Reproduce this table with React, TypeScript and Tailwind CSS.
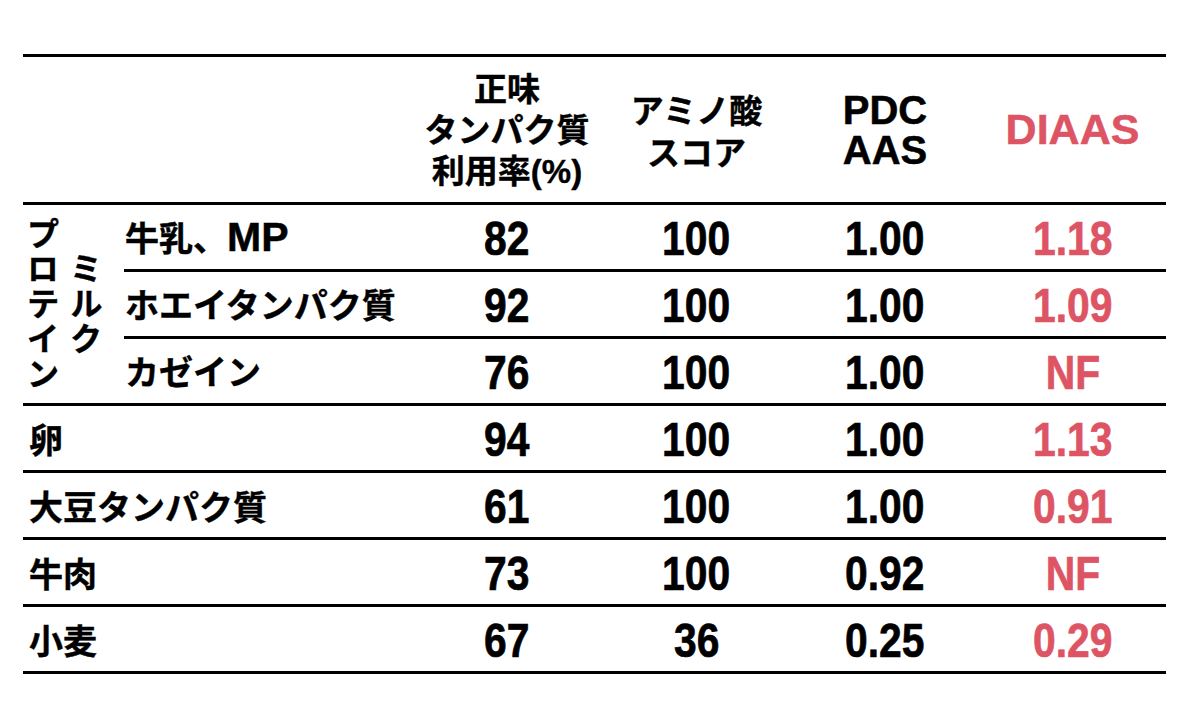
const jp = "font-['Noto_Sans_CJK_JP','Liberation_Sans',sans-serif] font-bold [-webkit-text-stroke:0.4px_currentColor]"
const num = "inline-block scale-x-[0.85] font-['Liberation_Sans',sans-serif] font-bold [-webkit-text-stroke:0.7px_currentColor]"

type Vals = [string, string, string, string]

const milk: { label: React.ReactNode; key: string; vals: Vals }[] = [
  {
    key: 'milk',
    label: (
      <>
        牛乳、<span className="font-['Liberation_Sans',sans-serif] font-bold text-[41px] [-webkit-text-stroke:0.5px_currentColor]">MP</span>
      </>
    ),
    vals: ['82', '100', '1.00', '1.18'],
  },
  { key: 'whey', label: 'ホエイタンパク質', vals: ['92', '100', '1.00', '1.09'] },
  { key: 'casein', label: 'カゼイン', vals: ['76', '100', '1.00', 'NF'] },
]

const rows: { label: string; vals: Vals }[] = [
  { label: '卵', vals: ['94', '100', '1.00', '1.13'] },
  { label: '大豆タンパク質', vals: ['61', '100', '1.00', '0.91'] },
  { label: '牛肉', vals: ['73', '100', '0.92', 'NF'] },
  { label: '小麦', vals: ['67', '36', '0.25', '0.29'] },
]

function Cells({ vals }: { vals: Vals }) {
  return (
    <>
      <div className="w-[190px] flex items-center justify-center pt-[3px] text-[48px] leading-none text-black">
        <span className={num}>{vals[0]}</span>
      </div>
      <div className="w-[189px] flex items-center justify-center pt-[3px] text-[48px] leading-none text-black">
        <span className={num}>{vals[1]}</span>
      </div>
      <div className="w-[188px] flex items-center justify-center pt-[3px] text-[48px] leading-none text-black">
        <span className={num}>{vals[2]}</span>
      </div>
      <div className="w-[187px] flex items-center justify-center pt-[3px] text-[48px] leading-none text-[#dd5464]">
        <span className={num}>{vals[3]}</span>
      </div>
    </>
  )
}

function Vertical({ text }: { text: string }) {
  return (
    <div
      className={`w-[34px] [writing-mode:vertical-rl] [text-orientation:upright] text-[33px] leading-[34px] tracking-[2px] text-black ${jp}`}
    >
      {text}
    </div>
  )
}

export default function App() {
  return (
    <div className="w-[1185px] h-[720px] bg-white pt-[54px] pl-[23px]">
      <div className="w-[1143px] border-t-[3px] border-black">
        {/* header */}
        <div className="flex h-[148px] border-b-[3px] border-black">
          <div className="w-[389px]" />
          <div className={`w-[190px] flex items-center justify-center text-center text-[33px] leading-[41px] text-black ${jp}`}>
            <p>
              正味
              <br />
              タンパク質
              <br />
              利用率<span className="font-['Liberation_Sans',sans-serif] font-bold">(%)</span>
            </p>
          </div>
          <div className={`w-[189px] flex items-center justify-center text-center text-[33px] leading-[42px] text-black ${jp}`}>
            <p>
              アミノ酸
              <br />
              スコア
            </p>
          </div>
          <div className="w-[188px] flex items-center justify-center text-center font-['Liberation_Sans',sans-serif] font-bold text-[40px] leading-[40px] text-black [-webkit-text-stroke:0.5px_currentColor]">
            <p>
              PDC
              <br />
              AAS
            </p>
          </div>
          <div className="w-[187px] flex items-center justify-center font-['Liberation_Sans',sans-serif] font-bold text-[43px] leading-none text-[#dd5464] [-webkit-text-stroke:0.5px_currentColor]">
            DIAAS
          </div>
        </div>

        {/* milk protein group */}
        <div className="flex border-b-[3px] border-black">
          <div className="w-[101px] flex items-center pl-[3px] gap-[9px]">
            <Vertical text="プロテイン" />
            <Vertical text="ミルク" />
          </div>
          <div className="flex-1 flex flex-col">
            {milk.map((r, i) => (
              <div key={r.key} className={`flex ${i < milk.length - 1 ? 'h-[67px] border-b-[3px] border-black' : 'h-[64px]'}`}>
                <div className={`w-[288px] flex items-center pl-[1px] text-[34px] leading-none text-black ${jp}`}>{r.label}</div>
                <Cells vals={r.vals} />
              </div>
            ))}
          </div>
        </div>

        {rows.map((r) => (
          <div key={r.label} className="flex h-[67px] border-b-[3px] border-black">
            <div className={`w-[389px] flex items-center pl-[6px] text-[34px] text-black ${jp}`}>{r.label}</div>
            <Cells vals={r.vals} />
          </div>
        ))}
      </div>
    </div>
  )
}
